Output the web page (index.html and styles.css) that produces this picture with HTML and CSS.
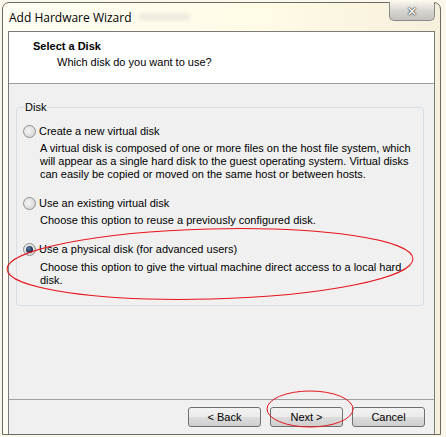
FILE: index.html
```html
<!DOCTYPE html>
<html lang="en">
<head>
    <meta charset="UTF-8">
    <title>Add Hardware Wizard</title>
    <link rel="stylesheet" href="styles.css">
</head>
<body>

<div class="window">
    <div class="titlebar">
        <span class="title">Add Hardware Wizard</span>
        <span class="title-blur"></span>
        <button class="close">&#x2715;</button>
    </div>

    <div class="client">
        <div class="header">
            <h3>Select a Disk</h3>
            <p>Which disk do you want to use?</p>
        </div>

        <div class="content">
            <fieldset class="group">
                <legend>Disk</legend>

                <div class="option">
                    <label><span class="radio"></span>Create a new virtual disk</label>
                    <p>A virtual disk is composed of one or more files on the host file system, which will appear as a single hard disk to the guest operating system. Virtual disks can easily be copied or moved on the same host or between hosts.</p>
                </div>

                <div class="option">
                    <label><span class="radio"></span>Use an existing virtual disk</label>
                    <p>Choose this option to reuse a previously configured disk.</p>
                </div>

                <div class="option last">
                    <label><span class="radio checked"></span>Use a physical disk (for advanced users)</label>
                    <p>Choose this option to give the virtual machine direct access to a local hard disk.</p>
                </div>
            </fieldset>
        </div>

        <div class="footer">
            <button class="btn">&lt; Back</button>
            <button class="btn">Next &gt;</button>
            <button class="btn">Cancel</button>
        </div>
    </div>
</div>

<!-- hand drawn red marks on top of the screenshot -->
<svg class="marks" width="446" height="437" viewBox="0 0 446 437">
    <ellipse cx="210" cy="264" rx="203" ry="35" transform="rotate(-1.5 210 264)" fill="none" stroke="#e8141c" stroke-width="1"/>
    <ellipse cx="310" cy="409" rx="43" ry="18" fill="none" stroke="#e8141c" stroke-width="1"/>
</svg>

</body>
</html>
```

FILE: styles.css
```css
body {
    margin: 0;
    width: 446px;
    height: 437px;
    overflow: hidden;
    background: #fbf7ea;
    font-family: "Liberation Sans", Arial, sans-serif;
    font-size: 11px;
    color: #000;
    position: relative;
}

.window {
    margin: 2px 0 0 2px;
    width: 439px;
    height: 433px;
    border: 1px solid #6b6b66;
    border-radius: 7px 7px 0 0;
    background: linear-gradient(to right, #fffef3, #fffbe6 60%, #f6efdc);
    box-sizing: border-box;
    display: flex;
    flex-direction: column;
}

.titlebar {
    height: 28px;
    position: relative;
    display: flex;
    align-items: center;
    padding-left: 6px;
}

.title {
    font-family: "Open Sans", sans-serif;
    font-size: 12px;
    color: #000;
}

.title-blur {
    width: 52px;
    height: 6px;
    margin-left: 6px;
    border-radius: 3px;
    background: #ece7dc;
    filter: blur(2px);
}

.close {
    position: absolute;
    top: -1px;
    right: 5px;
    width: 46px;
    height: 19px;
    border: 1px solid #8b8b86;
    border-top: none;
    border-radius: 0 0 5px 5px;
    background: linear-gradient(#f5f3ec, #d7d5cf 50%, #c4c2bd);
    color: #fff;
    font-family: "DejaVu Sans", sans-serif;
    font-size: 13px;
    font-weight: bold;
    line-height: 17px;
    text-shadow: 0 0 2px #222, 0 0 1px #222;
    padding: 0;
}

.client {
    margin: 0 5px;
    flex: 1;
    border: 1px solid #7b7b7b;
    border-bottom: none;
    background: #f0f0f0;
    display: flex;
    flex-direction: column;
}

.header {
    height: 52px;
    background: #fff;
    border-bottom: 1px solid #a0a0a0;
    box-sizing: border-box;
    padding: 8px 0 0 24px;
}

.header h3 {
    margin: 0;
    font-size: 11px;
    font-weight: bold;
    line-height: 13px;
}

.header p {
    margin: 3px 0 0 24px;
    line-height: 13px;
}

.content {
    flex: 1;
    padding: 17px 10px 0 7px;
}

.group {
    margin: 0;
    height: 205px;
    border: 1px solid #d5dfe5;
    border-radius: 3px;
    padding: 10px 10px 0 6px;
    box-sizing: border-box;
}

.group legend {
    padding: 0 1px;
    margin-left: 1px;
    line-height: 13px;
}

.option {
    margin-bottom: 15px;
}

.option label {
    display: flex;
    align-items: center;
    gap: 3px;
    line-height: 14px;
}

.option p {
    margin: 4px 0 0 17px;
    line-height: 13px;
}

.option.last p {
    margin-top: 5px;
}

.radio {
    width: 11px;
    height: 11px;
    border: 1px solid #8e8f8f;
    border-radius: 50%;
    background: radial-gradient(circle at 40% 40%, #f4f4f4, #cfcfcf);
    position: relative;
}

.radio.checked:after {
    content: "";
    position: absolute;
    left: 2px;
    top: 2px;
    width: 7px;
    height: 7px;
    border-radius: 50%;
    background: radial-gradient(circle at 40% 35%, #5d7fa6, #0f2744 70%);
}

.footer {
    height: 35px;
    border-top: 1px solid #a0a0a0;
    display: flex;
    justify-content: flex-end;
    gap: 9px;
    padding: 7px 9px 0 0;
    box-sizing: border-box;
}

.btn {
    width: 73px;
    height: 20px;
    border: 1px solid #707070;
    border-radius: 3px;
    background: linear-gradient(#f2f2f2, #ebebeb 50%, #dddddd 50%, #cfcfcf);
    font-family: "Liberation Sans", Arial, sans-serif;
    font-size: 11px;
    color: #000;
    padding: 0;
}

.marks {
    position: absolute;
    left: 0;
    top: 0;
    pointer-events: none;
}
```
